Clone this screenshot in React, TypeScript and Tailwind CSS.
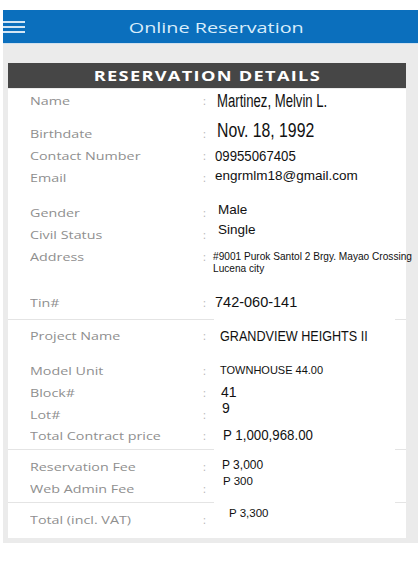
import type { ReactNode } from "react"

const sans = "font-['Open_Sans','DejaVu_Sans',sans-serif]"
const arial = "font-['Liberation_Sans',Arial,sans-serif]"

function Row({
  label,
  children,
  className = "",
  h = "h-[22px]",
}: {
  label: string
  children?: ReactNode
  className?: string
  h?: string
}) {
  return (
    <div className={`flex items-center leading-none ${h} ${className}`}>
      <div className="flex w-[195px] shrink-0 items-center pl-[22px]">
        <span
          className={`${sans} inline-block origin-left scale-x-[1.3] whitespace-nowrap text-[11px] leading-none text-[#8f8f8f]`}
        >
          {label}
        </span>
      </div>
      <span className={`${sans} w-[10px] shrink-0 text-[11px] leading-none text-[#b5b5b5]`}>:</span>
      {children}
    </div>
  )
}

function Divider({ className = "" }: { className?: string }) {
  return (
    <div className={`flex h-px ${className}`}>
      <div className="w-[206px] bg-[#e4e4e4]" />
      <div className="ml-auto w-[11px] bg-[#e4e4e4]" />
    </div>
  )
}

export default function App() {
  return (
    <div className="w-[418px] bg-white pl-[3px] pt-[10px]">
      {/* top bar */}
      <div className="flex h-[34px] items-center border-b border-[#cfe0ee] bg-[#0b6fbd]">
        <div className="flex w-[22px] flex-col gap-[3px]">
          <div className="h-[2px] bg-[#d3e5f4]" />
          <div className="h-[2px] bg-[#d3e5f4]" />
          <div className="h-[2px] bg-[#d3e5f4]" />
        </div>
        <div className="flex-1 pr-[11px] text-center">
          <span className={`${sans} inline-block scale-x-[1.32] text-[15px] text-[#d9edfb]`}>
            Online Reservation
          </span>
        </div>
      </div>

      <div className="bg-[#ebebeb] pb-[5px] pl-[5px] pr-[12px] pt-[19px]">
        <div className="flex h-[25px] items-center justify-center bg-[#464646]">
          <span className={`${sans} inline-block scale-x-[1.3] text-[14px] font-bold tracking-[1px] text-white`}>
            RESERVATION DETAILS
          </span>
        </div>

        <div className="bg-white pb-[8px]">
          <Row label="Name" className="mt-[1px]">
            <span
              className={`${arial} ml-[4px] inline-block translate-y-[1px] origin-left scale-x-[0.73] whitespace-nowrap text-[18px] leading-none text-[#111]`}
            >
              Martinez, Melvin L.
            </span>
          </Row>
          <Row label="Birthdate" className="mt-[12px]" h="h-[21px]">
            <span
              className={`${arial} ml-[4px] inline-block -translate-y-[4px] origin-left scale-x-[0.79] whitespace-nowrap text-[20px] leading-none text-[#111]`}
            >
              Nov. 18, 1992
            </span>
          </Row>
          <Row label="Contact Number">
            <span
              className={`${arial} ml-[2px] inline-block origin-left scale-x-[0.88] text-[15px] leading-none text-[#111]`}
            >
              09955067405
            </span>
          </Row>
          <Row label="Email">
            <span className={`${arial} ml-[2px] -translate-y-[1px] text-[13.5px] leading-none text-[#111]`}>
              engrmlm18@gmail.com
            </span>
          </Row>

          <Row label="Gender" className="mt-[14px]" h="h-[21px]">
            <span className={`${arial} ml-[5px] -translate-y-[3px] text-[13.5px] leading-none text-[#111]`}>
              Male
            </span>
          </Row>
          <Row label="Civil Status">
            <span className={`${arial} ml-[5px] -translate-y-[4px] text-[13.5px] leading-none text-[#111]`}>
              Single
            </span>
          </Row>
          <Row label="Address">
            <div
              className={`${arial} inline-block translate-y-[6px] origin-left scale-x-[0.92] whitespace-nowrap text-[11px] leading-[12px] text-[#111]`}
            >
              <div>#9001 Purok Santol 2 Brgy. Mayao Crossing</div>
              <div>Lucena city</div>
            </div>
          </Row>

          <Row label="Tin#" className="mt-[24px]">
            <span className={`${arial} ml-[2px] text-[14.5px] leading-none text-[#111]`}>742-060-141</span>
          </Row>
          <Divider className="mt-[6px]" />

          <Row label="Project Name" className="mt-[4px]">
            <span
              className={`${arial} ml-[7px] inline-block translate-y-[1px] origin-left scale-x-[0.9] whitespace-nowrap text-[14px] leading-none text-[#111]`}
            >
              GRANDVIEW HEIGHTS II
            </span>
          </Row>
          <Row label="Model Unit" className="mt-[13px]">
            <span className={`${arial} ml-[7px] text-[11px] leading-none text-[#111]`}>TOWNHOUSE 44.00</span>
          </Row>
          <Row label="Block#">
            <span className={`${arial} ml-[8px] text-[14px] leading-none text-[#111]`}>41</span>
          </Row>
          <Row label="Lot#">
            <span className={`${arial} ml-[9px] -translate-y-[6px] text-[14px] leading-none text-[#111]`}>9</span>
          </Row>
          <Row label="Total Contract price" h="h-[21px]">
            <span
              className={`${arial} ml-[10px] inline-block -translate-y-[1px] origin-left scale-x-[0.95] whitespace-nowrap text-[14px] leading-none text-[#111]`}
            >
              P 1,000,968.00
            </span>
          </Row>
          <Divider className="mt-[3px]" />

          <Row label="Reservation Fee" className="mt-[5px]">
            <span className={`${arial} ml-[9px] -translate-y-[1px] text-[12px] leading-none text-[#111]`}>P 3,000</span>
          </Row>
          <Row label="Web Admin Fee">
            <span className={`${arial} ml-[10px] -translate-y-[6px] text-[11.5px] leading-none text-[#111]`}>P 300</span>
          </Row>
          <Divider className="mt-[3px]" />

          <Row label="Total (incl. VAT)" className="mt-[5px]">
            <span className={`${arial} ml-[16px] -translate-y-[5px] text-[11.5px] leading-none text-[#111]`}>P 3,300</span>
          </Row>
        </div>
      </div>
    </div>
  )
}
